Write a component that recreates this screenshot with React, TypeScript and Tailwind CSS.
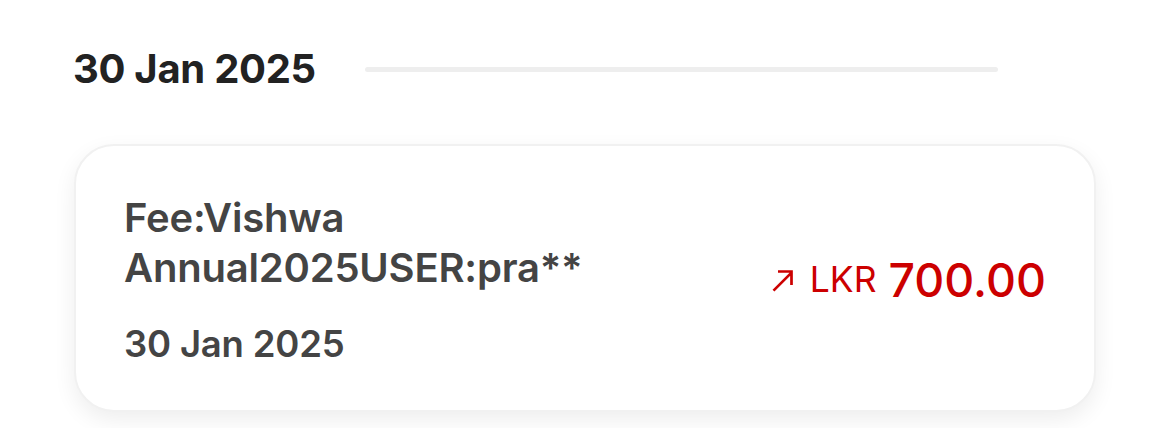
export default function App() {
  return (
    <div
      className="w-[1170px] h-[428px] bg-white overflow-hidden"
      style={{ fontFamily: "Inter, 'Noto Sans', sans-serif" }}
    >
      <div className="pl-[73px] pt-[44px] flex items-center">
        <div className="text-[40px] leading-[50px] font-bold text-[#222222] tracking-[-0.3px]">
          30 Jan 2025
        </div>
        <div className="ml-[49px] w-[633px] h-[5px] rounded-full bg-[#eeeeee]" />
      </div>
      <div className="ml-[74px] mt-[50px] w-[1022px] h-[268px] rounded-[40px] border-2 border-[#f1f1f1] bg-white shadow-[0_8px_22px_rgba(0,0,0,0.07)] flex items-center justify-between pl-[48px] pr-[48px]">
        <div className="flex flex-col text-[#444444] font-semibold">
          <div className="text-[40px] leading-[50px] w-[520px] tracking-[-0.2px]">
            Fee:Vishwa Annual2025USER:pra**
          </div>
          <div className="text-[36.5px] leading-[40px] mt-[31px] tracking-[-0.2px]">30 Jan 2025</div>
        </div>
        <div className="flex items-center text-[#cc0000] mt-[4px]">
          <svg width="27" height="27" viewBox="0 0 24 24" className="mr-[14px]">
            <path
              d="M4 21 L20 5 M8 4 H20 V16"
              fill="none"
              stroke="#cc0000"
              strokeWidth="2.4"
              strokeLinecap="butt"
            />
          </svg>
          <span className="text-[35.5px] leading-none font-normal">LKR</span>
          <span className="text-[46.5px] leading-none font-medium ml-[12px]">700.00</span>
        </div>
      </div>
    </div>
  );
}
